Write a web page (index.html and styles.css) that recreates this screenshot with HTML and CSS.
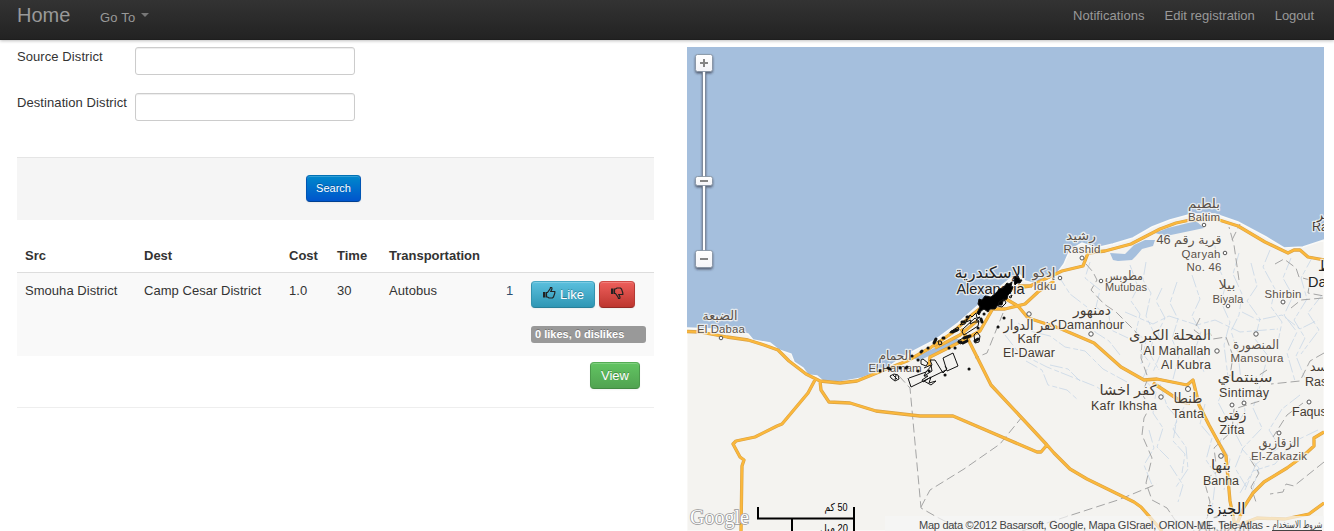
FILE: index.html
```html
<!DOCTYPE html>
<html lang="en">
<head>
<meta charset="utf-8">
<title>Home</title>
<link rel="stylesheet" href="styles.css">
</head>
<body>
<nav class="navbar">
  <a class="brand">Home</a>
  <a class="dropdown">Go To <i class="caret"></i></a>
  <div class="account"><a class="n1">Notifications</a><a class="n2">Edit registration</a><a class="n3">Logout</a></div>
</nav>
<main class="page">
  <section class="left">
    <form class="search">
      <div class="field"><label for="src">Source District</label><input id="src" type="text"></div>
      <div class="field"><label for="dst">Destination District</label><input id="dst" type="text"></div>
      <div class="actions"><button type="button" class="btn primary">Search</button></div>
    </form>
    <table class="routes">
      <colgroup><col class="c1"><col class="c2"><col class="c3"><col class="c4"><col class="c5"><col class="c6"><col></colgroup>
      <thead><tr><th>Src</th><th>Dest</th><th>Cost</th><th>Time</th><th>Transportation</th><th></th><th></th></tr></thead>
      <tbody><tr>
        <td>Smouha District</td><td>Camp Cesar District</td><td>1.0</td><td>30</td><td>Autobus</td><td class="count">1</td>
        <td>
          <div class="votes">
            <button type="button" class="btn info"><svg class="thumb" viewBox="0 0 14 14"><path d="M1 6h2.500v5.500H1z" fill="#222"/><path d="M4.500 6.500h1L8 3l.5-1.500h1.200L10 3 8.800 5.500h4v1.700L11.500 11l-1 1H7L5.500 11h-1z" fill="none" stroke="#222" stroke-width="1.200"/></svg>Like</button>
            <button type="button" class="btn danger" aria-label="Dislike"><svg class="thumb" viewBox="0 0 14 14"><path d="M1 2.500h2.500V8H1z" fill="#222"/><path d="M4.500 7.500h1L8 11l.5 1.500h1.200L10 11 8.800 8.500h4V6.800L11.500 3l-1-1H7L5.500 3h-1z" fill="none" stroke="#222" stroke-width="1.200"/></svg></button>
          </div>
          <div class="badge">0 likes, 0 dislikes</div>
        </td>
      </tr></tbody>
    </table>
    <div class="view"><button type="button" class="btn success">View</button></div>
  </section>
  <section class="map">
    <svg width="637" height="484" viewBox="687 47 637 484">
      <defs>
        <linearGradient id="knob" x1="0" y1="0" x2="0" y2="1"><stop offset="0" stop-color="#fff"/><stop offset="1" stop-color="#f4f4f8"/></linearGradient>
        <filter id="shade" x="-50%" y="-50%" width="200%" height="200%"><feDropShadow dx="0" dy="1.5" stdDeviation="1.3" flood-color="#223" flood-opacity=".65"/></filter>
      </defs>
      <rect x="687" y="47" width="637" height="484" fill="#a5bfdd"/>
      <path class="land" d="M687 328L712 329 748 334 753 340 770 343 779 350 791 354 794 362 803 368 808 375 817 376 823 381 840 382 862 378 885 369 908 354 935 340 958 323 982 302 996 290 1010 279 1020 275 1025 281 1040 285 1055 276 1064 264 1070 250 1082 243 1096 248 1113 244 1133 238 1152 227 1170 220 1192 214 1215 214 1238 222 1266 237 1284 248 1303 247 1324 240V531H687z"/>
      <g class="water">
        <path d="M1110 253L1125 254 1134 245 1145 240 1155 240 1153 246 1142 249 1136 256 1132 260 1118 261 1113 260z"/>
        <path d="M1155 233L1168 228 1196 221 1204 228 1190 231 1166 236z"/>
        <path d="M914 358L922 354 955 338 962 340 940 351 918 361z"/>
      </g>
      <g class="streams">
        <path d="M1018 323l12 8 20 5 15 11 20 4 18 18 24 13M1005 335l14 18 28 14 20 8 30 12 13 9M1026 361l16 9 6 15 19 5 11 10M1058 275l12 19 17 13 8 25 14 9 11 14M1090 262l-5 16 15 12-4 17 13 9 2 14 17 8"/>
        <path d="M1130 265l8 22-7 14 9 13-4 18 10 9-5 23M1146 262l-3 18 8 13-5 23 8 17-4 21 9 16M1162 288l-6 13 9 17-7 14 4 18-9 22M1177 282l-7 21 8 16-6 20 7 17-6 23M1192 275l8 24-8 17 9 16-6 18 9 22M1214 240l4 26 8 18-5 18 9 20-6 23 4 32M1239 253l-6 21 9 20-3 21-8 16 7 22 3 28"/>
        <path d="M1251 263l6 23-10 15 13 18-5 20 13 17-6 21M1270 250l-7 17 12 22-4 18 11 15-5 25M1291 258l-8 20 10 18-9 19 13 17-10 21 8 28M1313 256l-12 22 6 21-13 21 11 18-9 18 10 25M1322 295l-14 18 11 17-18 24M1242 312l16 8 24-5 18 14 18-9M1125 312l28 12 16-8 28 9 18-5 25 12 38-3"/>
        <path d="M1140 350l10 13-7 15 13 14-3 21 10 15-6 19 14 14M1160 384l7 22 10 12-4 23 12 13-3 19M1184 407l-11 22 13 18 2 22-12 18M1205 404l-5 20 12 14-6 22 10 15-4 35M1227 382l-9 20 10 19-8 21 10 17-6 31M1242 392l3 19-11 20 9 17-8 20 12 20M1260 386l-7 22 9 20-20 21 17 19-8 27M1300 395l-18 14-13 21 11 17-24 17-11 26M1318 430l-25 12-18 22-22 7-13 22M1170 465l13 20-5 17M1149 430l5 18-10 17 8 20M1050 365l18 4 12 12"/>
      </g>
      <g class="borders">
        <path d="M899 376l11 12 11 120 14 8 25 13M921 507l9-17 34-21 36-25 22-27M1022 531l96-31 39-16M1003 313l-16 40-12 5M1086 264l7 8 4 8-6 10 13 14 12 8 19 19 7 10-1 17 7 20-6 16 8 13-6 11-2 17 10 23-6 25 6 17 15 8 8 12 23 13M1232 240l5-10 3-6M1239 280l-5-35-5-18M1200 318l-6 12 8 6 8-3 3 6 13-2 7 19-3 20M1205 531l5-29-6-22 13-8-3-24 18-17 2-22 26-8-5-23 12-8M1250 459l9 14-8 14 6 18M1275 264l9-5 12 9 3 9 11 3-2 13 16 3M1291 308l10-8 22-2M1324 353l-14 8-10 20-29 3M1324 462l-30 24-8-2-3 8-13 2"/>
        <path d="M1196 527l12-10M1303 403l-16 12-14 22"/>
      </g>
      <g class="roads">
        <path id="road-shape" d="M687 331.500L700 332 727 337 748 340 764 345 778 350 789 361 806 374 820 381 840 383 857 381 884 370 907 361 930 348 952 333 973 314 991 300 1010 289 1030 286 1045 279 1062 271 1083 266 1088 253 1105 251 1131 244 1160 229 1176 223 1190 220 1216 219 1238 226 1265 242 1288 253 1294 250 1300 250 1308 257 1324 260M816 378L808 393 782 424 777 426 755 437 736 441 733 444 740 457 744 460 742 466 741 531M820 381L821 390 829 402 850 403 876 411 920 416 953 416 1037 452 1041 452 1047 445 1054 453 1070 469 1087 479 1134 502 1141 507 1162 531M929 366l1-9 32-16 18-10 12-21M961 329l8 12 22 44 56 60M992 309l13 0 20-5 13-12 16-11M1006 299l12 7 10 12 31 10 35 15 27 24 23 13 13-1 30 6 6-5 6 25 10 20 17 31 4 45 5 25M1153 383l29 19 8 1M1018 286l14 0M935 348l25-13 17-14M1229 531l8-7 7-17 9-14 11-11 23-14 15-11 12-11 0-8 10-6M1324 503l-15 11-24 5-28-1-33 13"/>
      </g>
      <g class="roads-core"><use href="#road-shape"/></g>
      <g class="towns"><circle cx="721" cy="338" r="1.800"/><circle cx="1204" cy="225" r="1.800"/><circle cx="1082" cy="258" r="2"/><circle cx="1060" cy="278" r="1.800"/><circle cx="1101" cy="281" r="1.800"/><circle cx="1225" cy="253" r="1.800"/><circle cx="1228" cy="306" r="1.800"/><circle cx="1283" cy="302" r="2"/><circle cx="1029" cy="314" r="2.200"/><circle cx="1091" cy="334" r="2.200"/><circle cx="1217" cy="351" r="2.200"/><circle cx="1256" cy="334" r="2.200"/><circle cx="1161" cy="397" r="2.200"/><circle cx="1188" cy="389" r="2.500"/><circle cx="1232" cy="405" r="2"/><circle cx="1244" cy="403" r="2"/><circle cx="1309" cy="402" r="2"/><circle cx="1279" cy="433" r="2"/><circle cx="1221" cy="456" r="2.300"/></g>
      <g class="labels">
        <g class="small">
          <text class="ar" x="720" y="320" textLength="35" lengthAdjust="spacingAndGlyphs">الضبعة</text><text x="721" y="333" textLength="48">El Dabaa</text>
          <text class="ar" x="895" y="360" textLength="33" lengthAdjust="spacingAndGlyphs">الحمام</text><text x="895" y="372" textLength="53">El-Hamam</text>
          <text class="ar" x="1204" y="208" textLength="32" lengthAdjust="spacingAndGlyphs">بلطيم</text><text x="1204" y="221" textLength="32">Baltim</text>
          <text class="ar" x="1081" y="240" textLength="30" lengthAdjust="spacingAndGlyphs">رشيد</text><text x="1082" y="253" textLength="37">Rashid</text>
          <text class="ar" x="1044" y="277" textLength="23" lengthAdjust="spacingAndGlyphs">إدكو</text><text x="1045" y="290" textLength="23">Idku</text>
          <text class="ar" x="1124" y="280" textLength="38" lengthAdjust="spacingAndGlyphs">مطوبس</text><text x="1126" y="291" class="tiny" textLength="42">Mutubas</text>
          <text class="ar" x="1189" y="244" textLength="65" lengthAdjust="spacingAndGlyphs">قرية رقم 46</text><text x="1201" y="258" textLength="39">Qaryah</text><text x="1204" y="271" textLength="35">No. 46</text>
          <text class="ar" x="1227" y="289" textLength="17" lengthAdjust="spacingAndGlyphs">بيلا</text><text x="1228" y="303" textLength="31">Biyala</text>
          <text x="1283" y="298" textLength="37">Shirbin</text>
          <text class="ar" x="1256" y="349" textLength="46" lengthAdjust="spacingAndGlyphs">المنصورة</text><text x="1257" y="362" textLength="53">Mansoura</text>
          <text class="ar" x="1279" y="447" textLength="41" lengthAdjust="spacingAndGlyphs">الزقازيق</text><text x="1279" y="460" textLength="56">El-Zakazik</text>
        </g>
        <g class="medium">
          <text class="ar" x="1030" y="330" textLength="53" lengthAdjust="spacingAndGlyphs">كفر الدوار</text><text x="1029" y="343" textLength="23">Kafr</text><text x="1029" y="357" textLength="52">El-Dawar</text>
          <text class="ar" x="1092" y="315" textLength="38" lengthAdjust="spacingAndGlyphs">دمنهور</text><text x="1091" y="329" textLength="66">Damanhour</text>
          <text class="ar" x="1170" y="340" textLength="82" lengthAdjust="spacingAndGlyphs">المحلة الكبرى</text><text x="1177" y="355" textLength="67">Al Mahallah</text><text x="1186" y="369" textLength="50">Al Kubra</text>
          <text class="ar" x="1128" y="395" textLength="57" lengthAdjust="spacingAndGlyphs">كفر اخشا</text><text x="1124" y="410" textLength="66">Kafr Ikhsha</text>
          <text class="ar" x="1188" y="403" textLength="29" lengthAdjust="spacingAndGlyphs">طنطا</text><text x="1188" y="418" textLength="32">Tanta</text>
          <text class="ar" x="1245" y="382" textLength="55" lengthAdjust="spacingAndGlyphs">سينتماي</text><text x="1244" y="397" textLength="50">Sintimay</text>
          <text class="ar" x="1232" y="420" textLength="29" lengthAdjust="spacingAndGlyphs">زفتى</text><text x="1232" y="434" textLength="25">Zifta</text>
          <text class="ar" x="1221" y="470" textLength="20" lengthAdjust="spacingAndGlyphs">بنها</text><text x="1221" y="485" textLength="36">Banha</text>
          <text class="edge" x="1312" y="231">Ras</text><text class="edge" x="1317" y="219">بر</text>
          <text class="edge" x="1305" y="386">Ras</text><text class="edge" x="1310" y="371">سد</text><text class="edge" x="1292" y="416">Faqus</text>
        </g>
        <g class="large">
          <text class="ar" x="990" y="278" textLength="71" lengthAdjust="spacingAndGlyphs">الإسكندرية</text><text x="990.500" y="294" textLength="68">Alexandria</text>
          <text class="ar" x="1226" y="514" textLength="39" lengthAdjust="spacingAndGlyphs">الجيزة</text><text x="1224" y="532" textLength="52">Al-Jizah</text>
          <text class="edge" x="1308" y="287">Damietta</text><text class="edge" x="1318" y="271">ط</text>
        </g>
      </g>
      <g class="coverage">
        <path class="solid" d="M978 304l1-5 3 1 3-4 6 1 6-5 2-3 4-1 4-5 2 1 3-2-1 5 2 0-2 5-3 3-1 4-4 2-1 4-4 0-3 4-5 0-2 3-4-3-3 2-2 4-2-2 3-6z"/>
        <path class="solid" d="M1014 280l1-4 2 2 1-2 2 4 2 0-2 3-3 0-2 2z"/>
        <path d="M970 315l2 2 4-4 1 5 3-1-4 3 3 2-5 0-4 2 1-4-5 2zM963 322l4-3-2 5-5 1zM963 329l12-11 4 3-1 5-14 9-2-3zM974 335l3-3 3 4-1 6-4 1zM999 302l5-3 2 4-4 4-4-1zM1009 297l3-2-1 3zM950 332l8-5 1 3-9 3zM938 341l3 0 1 3-3 1zM958 341l5-3 6-2-3 6-6 2z"/>
        <path d="M909 378l17-6-2 4M926 372l6-7-2-5 5 0 8 13 4-4-2-3M943 358l10-5 5 13-11 5zM946 370l-35 17-3-9M921 360l2-1 5 4-2 3-5-2zM924 368l7-3 1 6-8 5 4 0-6 4 1 2 8-5-2 6 7-2-5 4-7-4M890 376l4-2 4 1 1 4-4 2-4-3zM893 375l4 4M895 380l1-5"/>
        <path class="dots" d="M880 371h.1M888 368l2 1M912 356h.1M921 352l1-1M928 348h.1M934 343l2-4M943 338l1 0M952 332l5-2M962 322l2 0M967 317l1 0M970 336l-6 2M959 342l2 0M975 341l3-2M949 348h.1M955 348h.1M967 341l-4 2M969 369h.1M945 375h.1M998 327h.1M981 319l1 3M984 314h.1M1004 318h.1M978 328h.1M900 368h.1M906 368l1-1M918 371h.1M929 371h.1M918 360h.1"/>
      </g>
      <rect x="885" y="516" width="439" height="15" fill="#f5f5f5" opacity=".7"/>
      <text class="credits" x="919" y="529" textLength="344">Map data ©2012 Basarsoft, Google, Mapa GISrael, ORION-ME, Tele Atlas</text><text class="credits" x="1266" y="529">-</text>
      <text class="credits terms" x="1297.500" y="528" textLength="50" lengthAdjust="spacingAndGlyphs">شروط الاستخدام</text><path d="M1272 530.500h50" stroke="#444"/>
      <g class="scale"><path d="M758 507v12M757 518.500h98M854 507v24M792 518v13"/><text x="836" y="511" textLength="23" lengthAdjust="spacingAndGlyphs">50 كم</text><text x="834" y="532" textLength="28" lengthAdjust="spacingAndGlyphs">20 ميل</text></g>
      <text class="google" x="690" y="524" textLength="59">Google</text>
      <g filter="url(#shade)">
        <rect x="702.500" y="70" width="3" height="184" fill="#fff" stroke="#6e7d91" stroke-width=".8"/>
        <rect x="695.500" y="54.500" width="17" height="17" rx="2" class="knob"/><rect x="695.500" y="176.500" width="17" height="9" rx="2" class="knob"/><rect x="695.500" y="250.500" width="17" height="17" rx="2" class="knob"/>
      </g>
      <path d="M700 63h8M704 59v8M700 181h8M700 259h8" stroke="#858585" stroke-width="2"/>
    </svg>
  </section>
</main>
</body>
</html>
```
FILE: styles.css
```css
* { box-sizing: border-box; }
body { margin: 0; height: 531px; overflow: hidden; background: #fff; color: #333; font: 13px/18px "Liberation Sans", "DejaVu Sans", sans-serif; }
.navbar { display: flex; height: 40px; padding: 0 20px 0 17px; background: linear-gradient(#333, #222); box-shadow: 0 1px 3px rgba(0,0,0,.25), inset 0 -1px 0 rgba(0,0,0,.1); color: #999; }
.brand { width: 83px; padding-top: 5px; font-size: 20px; line-height: 20px; }
.dropdown { padding-top: 9px; letter-spacing: .2px; }
.caret { display: inline-block; margin: 0 0 5px 2px; border: 4px solid transparent; border-top-color: #777; border-bottom: 0; }
.account { display: flex; gap: 20px; margin-left: auto; padding-top: 7px; }
.n3 { letter-spacing: -.1px; }
.n1 { letter-spacing: .05px; }
.page { display: flex; gap: 33px; padding: 7px 0 0 17px; }
.left { width: 637px; }
.field { display: flex; height: 28px; margin-bottom: 18px; }
.field label { width: 118px; padding-top: 1px; white-space: nowrap; letter-spacing: .08px; }
.field input { width: 220px; height: 28px; padding: 4px; border: 1px solid #ccc; border-radius: 3px; box-shadow: inset 0 1px 1px rgba(0,0,0,.075); }
.actions { display: flex; justify-content: center; height: 63px; margin-top: 36px; padding: 17px 4px 0 0; border-top: 1px solid #e5e5e5; background: #f5f5f5; }
.btn { display: inline-flex; align-items: center; justify-content: center; height: 27px; padding: 0; border: 1px solid; border-radius: 4px; color: #fff; font: 13px/18px "Liberation Sans", sans-serif; text-shadow: 0 -1px 0 rgba(0,0,0,.25); box-shadow: inset 0 1px 0 rgba(255,255,255,.2), 0 1px 2px rgba(0,0,0,.05); }
.primary { width: 55px; padding-bottom: 1px; font-size: 11px; background: linear-gradient(#08c, #05c); border-color: #0071b5 #0055b3 #003f91; }
.info { width: 64px; background: linear-gradient(#5bc0de, #2f96b4); border-color: #48a9c6 #3292ae #287f99; }
.danger { width: 36px; background: linear-gradient(#ee5f5b, #bd362f); border-color: #d14b46 #b33a35 #942a25; }
.success { width: 50px; background: linear-gradient(#62c462, #51a351); border-color: #54ad54 #4b994b #438a43; }
.thumb { width: 14px; height: 14px; margin-bottom: 3px; }
.info .thumb { margin-right: 4px; }
.routes { width: 637px; margin-top: 17px; border-collapse: separate; border-spacing: 0; table-layout: fixed; }
.c1 { width: 119px; } .c2 { width: 145px; } .c3 { width: 48px; } .c4 { width: 52px; } .c5 { width: 117px; } .c6 { width: 25px; }
th, td { padding: 8px 0 8px 8px; text-align: left; vertical-align: top; white-space: nowrap; }
th { height: 36px; padding-top: 10px; border-bottom: 1px solid #ddd; padding-bottom: 7px; }
td { height: 83px; padding-top: 9px; background: #f9f9f9; }
td { letter-spacing: .04px; }
td:last-child { padding-top: 8px; }
.routes .count { color: #2e4f6e; }
.votes { display: flex; gap: 4px; }
.badge { width: 115px; height: 17px; margin-top: 18px; padding-left: 4px; border-radius: 3px; background: #999; color: #fff; font-size: 11px; font-weight: bold; line-height: 17px; letter-spacing: 0; text-shadow: 0 -1px 0 rgba(0,0,0,.25); }
.view { display: flex; justify-content: flex-end; height: 52px; padding: 6px 14px 0 0; border-bottom: 1px solid #eee; }
.map, .map svg { display: block; width: 637px; height: 484px; }
.land { fill: #f4f3f0; stroke: #fafaf8; stroke-width: 1.500px; }
.water { fill: #a5bfdd; }
.streams { fill: none; stroke: #c2d2e5; stroke-width: .7px; stroke-dasharray: 13 3 5 2; }
.borders { fill: none; stroke: #a5a5a5; stroke-width: 1px; stroke-dasharray: 9 4; }
.roads { fill: none; stroke: #d9a144; stroke-width: 3.300px; stroke-linejoin: round; }
.roads-core { fill: none; stroke-width: 2.200px; stroke-linejoin: round; }
.roads-core use { stroke: #fbb83c; }
.coverage { fill: none; stroke: #111; stroke-width: 1px; }
.coverage .solid { fill: #000; }
.coverage .dots { stroke-width: 3px; stroke-linecap: round; }
.towns { fill: #fff; stroke: #555; }
.labels { fill: #443b33; font-family: "Liberation Sans", "DejaVu Sans", sans-serif; stroke: rgba(246,245,242,.8); stroke-width: 2.500px; stroke-linejoin: round; paint-order: stroke; text-anchor: middle; }
.small { font-size: 11.500px; fill: #5a5149; }
.small .tiny { font-size: 11px; }
.small .ar { font-size: 12.500px; }
.medium { font-size: 12.500px; }
.medium .ar { font-size: 14px; }
.large { font-size: 14.500px; fill: #222; }
.large .ar { font-size: 16px; }
.labels .edge { text-anchor: start; }
.credits { fill: #444; font: 11px "Liberation Sans", "DejaVu Sans", sans-serif; }
.terms { font-size: 10px; text-anchor: middle; }
.scale { fill: none; stroke: #000; stroke-width: 2px; }
.scale text { fill: #000; stroke: none; font: 11px "Liberation Sans", "DejaVu Sans", sans-serif; text-anchor: middle; direction: rtl; }
.google { fill: #fff; stroke: #999; stroke-width: 1.600px; paint-order: stroke; font: 20px "Liberation Serif", serif; }
.knob { fill: url(#knob); stroke: #7e8b9c; stroke-width: .8px; }
```
